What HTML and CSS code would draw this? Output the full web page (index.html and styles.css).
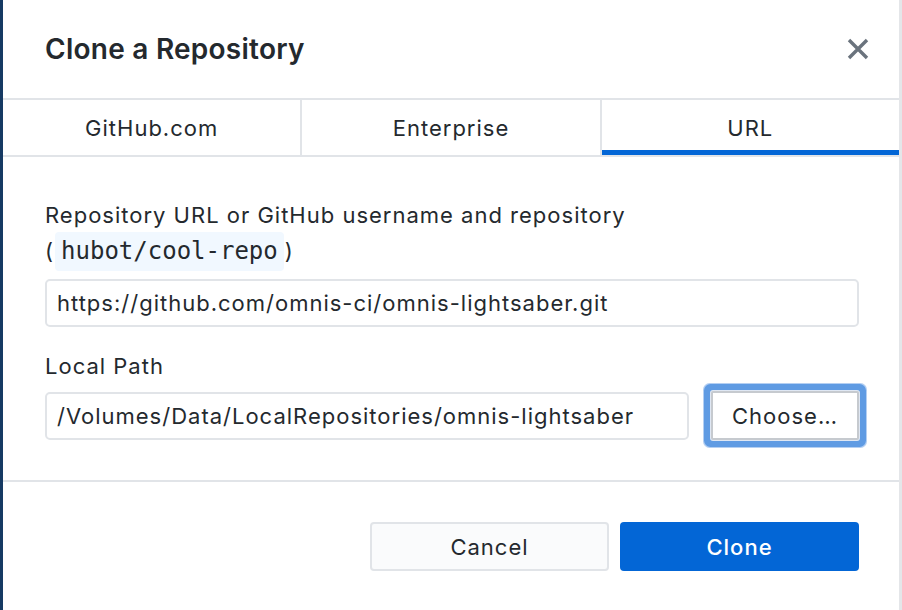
FILE: index.html
```html
<!DOCTYPE html>
<html>
<head>
<meta charset="utf-8">
<link rel="stylesheet" href="styles.css">
</head>
<body>
<div class="edge-left"></div>
<div class="dialog">
  <header class="header">
    <h1 class="title">Clone a Repository</h1>
    <button class="close" aria-label="Close">
      <svg width="22" height="22" viewBox="0 0 22 22"><path d="M2 2 L20 20 M20 2 L2 20" stroke="#6a737d" stroke-width="3.4" stroke-linecap="butt"/></svg>
    </button>
  </header>
  <nav class="tabs">
    <div class="tab">GitHub.com</div>
    <div class="tab">Enterprise</div>
    <div class="tab active">URL</div>
  </nav>
  <section class="body">
    <div class="label">Repository URL or GitHub username and repository<br>(<code class="code">hubot/cool-repo</code>)</div>
    <div class="input">https://github.com/omnis-ci/omnis-lightsaber.git</div>
    <div class="label label-path">Local Path</div>
    <div class="path-row">
      <div class="input path">/Volumes/Data/LocalRepositories/omnis-lightsaber</div>
      <button class="choose">Choose…</button>
    </div>
  </section>
  <footer class="footer">
    <button class="btn cancel">Cancel</button>
    <button class="btn clone">Clone</button>
  </footer>
</div>
<div class="edge-right"></div>
</body>
</html>
```
FILE: styles.css
```css
html, body {
  margin: 0;
  padding: 0;
  height: 610px;
  overflow: hidden;
}
body {
  display: flex;
  font-family: "Inter", "Liberation Sans", Arial, sans-serif;
  color: #24292e;
  background: #ffffff;
}
.edge-left {
  width: 3px;
  background: #163a63;
  flex: none;
}
.edge-right {
  width: 3px;
  background: #e4e6e9;
  flex: none;
}
.dialog {
  width: 896px;
  flex: none;
  background: #fff;
  display: flex;
  flex-direction: column;
}
.header {
  height: 98px;
  flex: none;
  border-bottom: 2px solid #e1e4e8;
  display: flex;
  align-items: center;
  justify-content: space-between;
  padding: 0 30px 0 42px;
}
.title {
  margin: 0;
  font-size: 28px;
  font-weight: 600;
  letter-spacing: 0.25px;
  color: #24292e;
}
.close {
  border: 0;
  background: none;
  padding: 0;
  width: 22px;
  height: 22px;
  display: flex;
}
.tabs {
  display: flex;
  flex: none;
  height: 55px;
  border-bottom: 2px solid #e1e4e8;
}
.tab {
  flex: 1;
  display: flex;
  align-items: center;
  justify-content: center;
  font-size: 22px;
  letter-spacing: 1px;
  color: #24292e;
  border-right: 2px solid #e1e4e8;
  box-sizing: border-box;
}
.tab:last-child { border-right: 0; }
.tab.active {
  border-bottom: 5px solid #0366d6;
  padding-top: 5px;
}
.body {
  padding: 40px 40px 0 42px;
  display: flex;
  flex-direction: column;
  flex: none;
  height: 325px;
  box-sizing: border-box;
  border-bottom: 2px solid #e1e4e8;
}
.label {
  font-size: 22px;
  letter-spacing: 1px;
  line-height: 36px;
}
.code {
  font-family: "DejaVu Sans Mono", monospace;
  font-size: 24px;
  letter-spacing: 0;
  background: #f1f8ff;
  padding: 5px 6px 6px;
  border-radius: 4px;
  margin: 0 1px;
}
.input {
  margin-top: 10px;
  height: 48px;
  box-sizing: border-box;
  border: 2px solid #e1e4e8;
  border-radius: 5px;
  padding: 0 10px;
  display: flex;
  align-items: center;
  font-size: 22px;
  letter-spacing: 1px;
  color: #24292e;
}
.label-path {
  margin-top: 21px;
}
.path-row {
  display: flex;
  align-items: center;
  gap: 22px;
  margin-top: 7px;
}
.path-row .input {
  margin-top: 0;
  flex: 1;
}
.choose {
  width: 148px;
  height: 49px;
  flex: none;
  background: #fff;
  border: 2px solid #c6cacf;
  border-radius: 2px;
  font-family: inherit;
  font-size: 22px;
  letter-spacing: 1px;
  color: #24292e;
  box-shadow: 0 0 0 1px #dfe7f3, 0 0 0 7px #5f9be3, 0 0 0 8px #b4cff2;
}
.footer {
  flex: 1;
  display: flex;
  justify-content: flex-end;
  align-items: flex-start;
  padding: 40px 40px 0 0;
  gap: 11px;
}
.btn {
  width: 239px;
  height: 49px;
  border-radius: 4px;
  font-family: inherit;
  font-size: 22px;
  letter-spacing: 1px;
}
.cancel {
  background: #fafbfc;
  border: 2px solid #e1e4e8;
  color: #24292e;
}
.clone {
  background: #0366d6;
  border: 0;
  color: #fff;
  font-weight: 500;
}
```
